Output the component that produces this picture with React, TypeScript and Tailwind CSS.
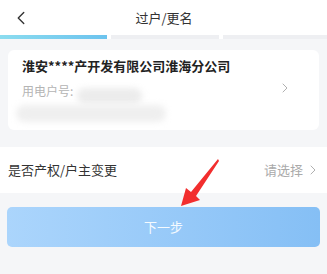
import { ChevronLeft, ChevronRight } from 'lucide-react';

const font = { fontFamily: '"Noto Sans CJK SC", "Noto Sans", sans-serif' };

export default function App() {
  return (
    <div className="w-[327px] h-[274px] bg-[#f5f6f8] flex flex-col overflow-hidden relative" style={font}>
      {/* Header */}
      <div className="h-[35px] bg-white flex items-center relative">
        <ChevronLeft className="absolute left-[10px] w-[22px] h-[22px] text-[#333]" strokeWidth={1.5} />
        <div className="flex-1 text-center text-[13px] text-[#333] leading-none pl-[1px]">过户/更名</div>
      </div>

      {/* Steps */}
      <div className="h-[4px] flex gap-[4px] bg-white">
        <div className="w-[107px] bg-gradient-to-r from-[#8bdcef] to-[#6cc3ee]" />
        <div className="w-[108px] bg-[#eeeff2]" />
        <div className="flex-1 bg-[#eeeff2]" />
      </div>

      {/* Account card */}
      <div className="mx-[8px] mt-[11px] h-[80px] bg-white rounded-[6px] pl-[14px] pr-[26px] flex items-center">
        <div className="flex-1 relative">
          <div className="text-[13px] font-bold text-[#222] leading-none">淮安****产开发有限公司淮海分公司</div>
          <div className="mt-[13px] text-[12px] text-[#b4b4b4] leading-none">用电户号:</div>
          <div className="absolute left-[55px] top-[29px] w-[65px] h-[16px] rounded-full bg-[#ececec] blur-[3px]" />
          <div className="mt-[8px] -ml-[6px] w-[150px] h-[17px] rounded-full bg-[#efefef] blur-[3px]" />
        </div>
        <ChevronRight className="w-[16px] h-[16px] text-[#aaa] -mt-[4px]" strokeWidth={1.4} />
      </div>

      {/* Row */}
      <div className="mt-[17px] h-[46px] bg-white flex items-center px-[8px]">
        <div className="flex-1 text-[13px] text-[#333]">是否产权/户主变更</div>
        <div className="text-[13px] text-[#aaa]">请选择</div>
        <ChevronRight className="w-[16px] h-[16px] text-[#aaa] ml-[2px] -mr-[2px]" strokeWidth={1.4} />
      </div>

      {/* Button */}
      <div className="mx-[7px] mt-[14px] h-[40px] rounded-[5px] bg-gradient-to-r from-[#abd5fc] to-[#85bff5] flex items-center justify-center">
        <span className="text-[13px] text-white/90">下一步</span>
      </div>

      {/* Red arrow annotation */}
      <svg className="absolute left-0 top-0 pointer-events-none" width="327" height="274">
        <polygon points="218,159 191,192 186,188 181,206 200,200 196,196 219,161" fill="#f22e2e" />
      </svg>
    </div>
  );
}
